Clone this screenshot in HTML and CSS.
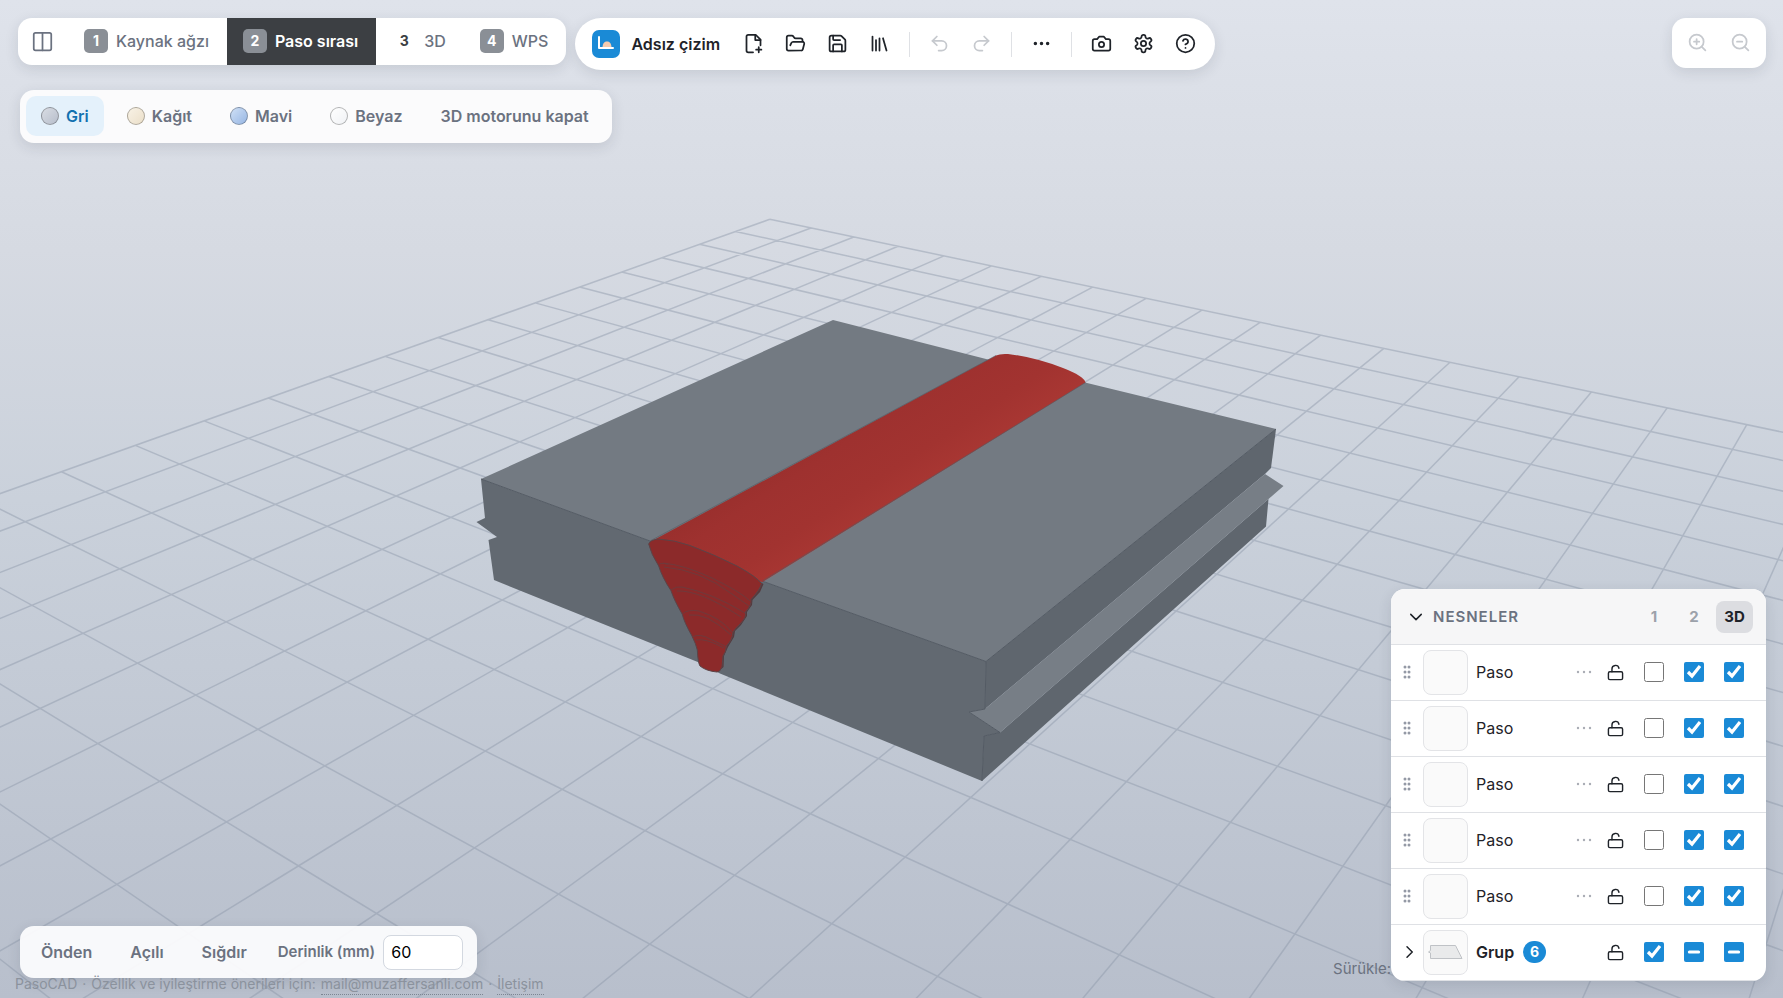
FILE: index.html
```html
<!DOCTYPE html>
<html lang="tr">
<head>
<meta charset="utf-8">
<meta name="viewport" content="width=device-width, initial-scale=1">
<title>PasoCAD</title>
<link rel="stylesheet" href="styles.css">
</head>
<body>
<svg class="sprite" aria-hidden="true">
  <symbol id="i-unlock" viewBox="0 0 24 24"><rect x="2" y="11" width="20" height="11" rx="2"/><path d="M7 11V7a5 5 0 0 1 9.900-1"/></symbol>
  <symbol id="i-grip" viewBox="0 0 8 14"><g fill="currentColor" stroke="none"><circle cx="2" cy="2" r="1.500"/><circle cx="6" cy="2" r="1.500"/><circle cx="2" cy="7" r="1.500"/><circle cx="6" cy="7" r="1.500"/><circle cx="2" cy="12" r="1.500"/><circle cx="6" cy="12" r="1.500"/></g></symbol>
  <symbol id="i-dots" viewBox="0 0 16 4"><g fill="currentColor" stroke="none"><circle cx="2" cy="2" r="1.200"/><circle cx="8" cy="2" r="1.200"/><circle cx="14" cy="2" r="1.200"/></g></symbol>
</svg>

<div class="app">
  <svg class="scene" viewBox="0 0 1783 998" preserveAspectRatio="xMidYMid slice" role="img" aria-label="3D">
    <defs>
      <linearGradient id="bead" gradientUnits="userSpaceOnUse" x1="800" y1="430" x2="865" y2="530">
        <stop offset="0" stop-color="#972e2c"/><stop offset=".3" stop-color="#9e312f"/><stop offset=".7" stop-color="#a23330"/><stop offset="1" stop-color="#a93733"/>
      </linearGradient>
    </defs>
    <path class="grid-lines" id="grid"/>
    <g class="plate">
      <path class="face-top" d="M833 320 988 359.500 1085 382.500 1276 429 986 661.500 762 581 650 541 481 479Z"/>
      <path class="face-front" d="M481 479 650 541 762 581 986 661.500 985 709 969 712 1000 732.500 984 736 982 781 720 673.500 699 662.500 494 580 488.500 540 497 537 476.500 522 485 518Z"/>
      <path class="face-side" d="M986 661.500 1276 429 1271 468 1265 474 985 709Z"/>
      <path class="face-side" d="M984 736 1000 732.500 1268.500 499 1266 526.500 982 781Z"/>
      <path class="face-groove" d="M969 712 985 709 1265 474 1283.500 486 1268.500 499 1000 732.500Z"/>
      <path class="edges" d="M481 479 650 541M762 581 986 661.500V662L985 709 969 712 1000 732.500 984 736 982 781M986 661.500 1276 429"/>
    </g>
    <path fill="url(#bead)" d="M650 542 996 355.500Q1000 353.500 1008 354 1034 357 1063 368 1084 376 1085.500 382.500L762.500 582 735 575Z"/>
    <path class="edges" d="M650 541 996 355.500M762.500 581 1085.500 382.500" opacity=".6"/>
    <path class="weld-back" d="M760 582 763.500 584 760 592 752.500 600 752 605 747 612 747 616 741 625 735 631 734 637 728 647 724 656 723.500 667 718 672 700 640Z"/>
    <path class="weld-face" d="M648.700 544Q650 540 658 539 675 540 690 545.500 713 554 737 566 757 577 761.500 583.500 760 590 751 599.500 752 605 745.500 612 747 617 740 624 735 629 733 632 733 639 726.500 646 726 652 723 656L722 667Q720 672 717 672 706 671 700 666 698 663 697.300 650 696 644 692 636 684 622 682.300 614.300 674 600 671 590.700 662 577 658.700 566 651 554 648.700 544Z"/>
    <path class="passes" d="M658 565Q661 562 668 564.500M663 563Q684 565 710 577 741 592 750 601M664 567Q700 570 732 594L749 606M671 590Q676 586 682 587 712 593 745 613M677 591Q700 590 741 617M682 614Q688 609 699 611 721 618 732 632M689 615Q706 612 731 635M692 637Q700 633 710 639L727 647M696 640Q706 638 724 648"/>
  </svg>

  <header class="top">
    <nav class="card tabs" aria-label="Sekmeler">
      <button class="tab tab-icon" type="button" aria-label="Bölünmüş görünüm"><svg class="icon" viewBox="0 0 24 24"><rect x="2" y="2" width="20" height="20" rx="2"/><path d="M12 2v20"/></svg></button>
      <button class="tab" type="button"><span class="num">1</span>Kaynak ağzı</button>
      <button class="tab active" type="button"><span class="num">2</span>Paso sırası</button>
      <button class="tab" type="button"><span class="num plain">3</span>3D</button>
      <button class="tab" type="button"><span class="num">4</span>WPS</button>
    </nav>
    <div class="card filebar">
      <svg class="logo" viewBox="0 0 28 28" aria-hidden="true"><rect width="28" height="28" rx="7" fill="#1a8ad6"/><path d="M10.500 18c0-5 2-6.500 4.500-6.500s4.500 1.500 4.500 6.500Z" fill="#f4cbb0"/><path d="M7 7v11h14" fill="none" stroke="#fff" stroke-width="2" stroke-linecap="round" stroke-linejoin="round"/></svg>
      <button class="title" type="button">Adsız çizim</button>
      <button class="tool" type="button" aria-label="Yeni"><svg class="icon" viewBox="0 0 24 24"><path d="M11.500 22H6a2 2 0 0 1-2-2V4a2 2 0 0 1 2-2h8.500L20 7.500v6.500"/><path d="M14 2v6h6M18 16v6M15 19h6"/></svg></button>
      <button class="tool" type="button" aria-label="Aç"><svg class="icon" viewBox="0 0 24 24"><path d="m6 14 1.500-2.900A2 2 0 0 1 9.240 10H20a2 2 0 0 1 1.940 2.500l-1.540 6a2 2 0 0 1-1.950 1.500H4a2 2 0 0 1-2-2V5a2 2 0 0 1 2-2h3.900a2 2 0 0 1 1.690.9l.81 1.200a2 2 0 0 0 1.670.9H18a2 2 0 0 1 2 2v2"/></svg></button>
      <button class="tool" type="button" aria-label="Kaydet"><svg class="icon" viewBox="0 0 24 24"><path d="M15.200 3a2 2 0 0 1 1.400.6l3.800 3.800a2 2 0 0 1 .6 1.400V19a2 2 0 0 1-2 2H5a2 2 0 0 1-2-2V5a2 2 0 0 1 2-2z"/><path d="M17 21v-7a1 1 0 0 0-1-1H8a1 1 0 0 0-1 1v7M7 3v4a1 1 0 0 0 1 1h7"/></svg></button>
      <button class="tool" type="button" aria-label="Kitaplık"><svg class="icon" viewBox="0 0 24 24"><path d="m16 6 4 14M12 6v14M8 8v12M4 4v16"/></svg></button>
      <span class="divider"></span>
      <button class="tool" type="button" aria-label="Geri al" disabled><svg class="icon" viewBox="0 0 24 24"><path d="M9 14 4 9l5-5"/><path d="M4 9h10.500a5.500 5.500 0 0 1 0 11H11"/></svg></button>
      <button class="tool" type="button" aria-label="Yinele" disabled><svg class="icon" viewBox="0 0 24 24"><path d="m15 14 5-5-5-5"/><path d="M20 9H9.500a5.500 5.500 0 0 0 0 11H13"/></svg></button>
      <span class="divider"></span>
      <button class="tool" type="button" aria-label="Diğer"><svg class="icon" viewBox="0 0 24 24"><g fill="currentColor"><circle cx="5" cy="12" r="1"/><circle cx="12" cy="12" r="1"/><circle cx="19" cy="12" r="1"/></g></svg></button>
      <span class="divider"></span>
      <button class="tool" type="button" aria-label="Ekran görüntüsü"><svg class="icon" viewBox="0 0 24 24"><path d="M14.500 4h-5L7 7H4a2 2 0 0 0-2 2v9a2 2 0 0 0 2 2h16a2 2 0 0 0 2-2V9a2 2 0 0 0-2-2h-3z"/><circle cx="12" cy="13" r="3"/></svg></button>
      <button class="tool" type="button" aria-label="Ayarlar"><svg class="icon" viewBox="0 0 24 24"><path d="M12.220 2h-.44a2 2 0 0 0-2 2v.18a2 2 0 0 1-1 1.730l-.43.25a2 2 0 0 1-2 0l-.15-.08a2 2 0 0 0-2.730.73l-.22.38a2 2 0 0 0 .73 2.730l.15.100a2 2 0 0 1 1 1.720v.51a2 2 0 0 1-1 1.740l-.15.090a2 2 0 0 0-.73 2.730l.22.380a2 2 0 0 0 2.730.730l.15-.080a2 2 0 0 1 2 0l.43.250a2 2 0 0 1 1 1.730V20a2 2 0 0 0 2 2h.44a2 2 0 0 0 2-2v-.18a2 2 0 0 1 1-1.730l.43-.25a2 2 0 0 1 2 0l.15.080a2 2 0 0 0 2.730-.73l.22-.39a2 2 0 0 0-.73-2.730l-.15-.080a2 2 0 0 1-1-1.740v-.5a2 2 0 0 1 1-1.740l.15-.090a2 2 0 0 0 .73-2.730l-.22-.38a2 2 0 0 0-2.730-.73l-.15.080a2 2 0 0 1-2 0l-.43-.25a2 2 0 0 1-1-1.730V4a2 2 0 0 0-2-2z"/><circle cx="12" cy="12" r="3"/></svg></button>
      <button class="tool" type="button" aria-label="Yardım"><svg class="icon" viewBox="0 0 24 24"><circle cx="12" cy="12" r="10"/><path d="M9.090 9a3 3 0 0 1 5.830 1c0 2-3 3-3 3M12 17h.01"/></svg></button>
    </div>
    <div class="card zoombar">
      <button class="tool" type="button" aria-label="Yakınlaştır" disabled><svg class="icon" viewBox="0 0 24 24"><circle cx="11" cy="11" r="8"/><path d="m21 21-4.350-4.350M11 8v6M8 11h6"/></svg></button>
      <button class="tool" type="button" aria-label="Uzaklaştır" disabled><svg class="icon" viewBox="0 0 24 24"><circle cx="11" cy="11" r="8"/><path d="m21 21-4.350-4.350M8 11h6"/></svg></button>
    </div>
  </header>

  <div class="card modes">
    <button class="pill selected" type="button"><span class="swatch gray"></span>Gri</button>
    <button class="pill" type="button"><span class="swatch paper"></span>Kağıt</button>
    <button class="pill" type="button"><span class="swatch blue"></span>Mavi</button>
    <button class="pill" type="button"><span class="swatch white"></span>Beyaz</button>
    <button class="pill" type="button">3D motorunu kapat</button>
  </div>

  <div class="bottom">
    <div class="card viewbar">
      <button class="pill" type="button">Önden</button>
      <button class="pill" type="button">Açılı</button>
      <button class="pill" type="button">Sığdır</button>
      <label class="depth" for="depth">Derinlik (mm)</label>
      <input class="depth-input" id="depth" type="text" inputmode="numeric" value="60">
    </div>

    <section class="card objects" aria-label="Nesneler">
      <div class="objects-head">
        <button class="collapse" type="button" aria-label="Daralt"><svg class="icon" viewBox="0 0 24 24"><path d="m5 8.500 7 7 7-7"/></svg></button>
        <h2 class="objects-title">NESNELER</h2>
        <button class="col" type="button">1</button>
        <button class="col" type="button">2</button>
        <button class="col current" type="button">3D</button>
      </div>
      <ul class="rows" id="rows">
        <li class="row"><svg class="grip"><use href="#i-grip"/></svg><span class="thumb"></span><span class="name">Paso</span><svg class="dots"><use href="#i-dots"/></svg><button class="lock" type="button" aria-label="Kilitle"><svg class="icon"><use href="#i-unlock"/></svg></button><input type="checkbox" aria-label="Paso 1"><input type="checkbox" aria-label="Paso 2" checked><input type="checkbox" aria-label="Paso 3D" checked></li>
        <li class="row"><svg class="grip"><use href="#i-grip"/></svg><span class="thumb"></span><span class="name">Paso</span><svg class="dots"><use href="#i-dots"/></svg><button class="lock" type="button" aria-label="Kilitle"><svg class="icon"><use href="#i-unlock"/></svg></button><input type="checkbox" aria-label="Paso 1"><input type="checkbox" aria-label="Paso 2" checked><input type="checkbox" aria-label="Paso 3D" checked></li>
        <li class="row"><svg class="grip"><use href="#i-grip"/></svg><span class="thumb"></span><span class="name">Paso</span><svg class="dots"><use href="#i-dots"/></svg><button class="lock" type="button" aria-label="Kilitle"><svg class="icon"><use href="#i-unlock"/></svg></button><input type="checkbox" aria-label="Paso 1"><input type="checkbox" aria-label="Paso 2" checked><input type="checkbox" aria-label="Paso 3D" checked></li>
        <li class="row"><svg class="grip"><use href="#i-grip"/></svg><span class="thumb"></span><span class="name">Paso</span><svg class="dots"><use href="#i-dots"/></svg><button class="lock" type="button" aria-label="Kilitle"><svg class="icon"><use href="#i-unlock"/></svg></button><input type="checkbox" aria-label="Paso 1"><input type="checkbox" aria-label="Paso 2" checked><input type="checkbox" aria-label="Paso 3D" checked></li>
        <li class="row"><svg class="grip"><use href="#i-grip"/></svg><span class="thumb"></span><span class="name">Paso</span><svg class="dots"><use href="#i-dots"/></svg><button class="lock" type="button" aria-label="Kilitle"><svg class="icon"><use href="#i-unlock"/></svg></button><input type="checkbox" aria-label="Paso 1"><input type="checkbox" aria-label="Paso 2" checked><input type="checkbox" aria-label="Paso 3D" checked></li>
        <li class="row"><button class="expand" type="button" aria-label="Genişlet"><svg class="icon" viewBox="0 0 24 24"><path d="m8 5 7 7-7 7"/></svg></button><span class="thumb"><svg class="preview" viewBox="0 0 36 16"><path d="M2.500 1.500h25l6.500 13H2.500V9L.5 8l2-1.500Z"/></svg></span><span class="name group">Grup<span class="count">6</span></span><span></span><button class="lock" type="button" aria-label="Kilitle"><svg class="icon"><use href="#i-unlock"/></svg></button><input type="checkbox" aria-label="Grup 1" checked><input type="checkbox" aria-label="Grup 2" data-mixed><input type="checkbox" aria-label="Grup 3D" data-mixed></li>
      </ul>
    </section>
  </div>

  <p class="hint">Sürükle:</p>
  <footer class="credits"><span>PasoCAD</span><span>·</span><span>Özellik ve iyileştirme önerileri için:</span><a href="mailto:mail@muzaffersanli.com">mail@muzaffersanli.com</a><span>·</span><a href="#">İletişim</a></footer>
</div>
<script src="scene.js"></script>
</body>
</html>
```
FILE: styles.css
```css
*, *::before, *::after { box-sizing: border-box; }

body {
  margin: 0;
  font-family: Inter, "Liberation Sans", sans-serif;
  font-size: 16px;
  line-height: 20px;
  color: #1f2329;
}

button, input { font: inherit; color: inherit; }
button { border: 0; background: none; padding: 0; cursor: pointer; }
.sprite { display: none; }

.app {
  position: relative;
  display: flex;
  flex-direction: column;
  min-height: 100vh;
  overflow: hidden;
  background: linear-gradient(#dfe3eb 0%, #d6dae2 25%, #cad1db 50%, #b8bfcc 100%);
}

.scene { position: absolute; inset: 0; width: 100%; height: 100%; }
.grid-lines { fill: none; stroke: #8b97a8; stroke-opacity: .45; stroke-width: 1.5; }
.face-top { fill: #737a82; }
.face-front { fill: #626971; }
.face-side { fill: #5f666e; }
.face-groove { fill: #777e86; }
.edges { fill: none; stroke: #545b64; stroke-width: 1; }
.weld-face { fill: #8c2a2a; stroke: #5b4448; stroke-width: 1; }
.weld-back { fill: #55393d; }
.passes { fill: none; stroke: #6f3a3c; stroke-width: 1; }

.card {
  background: #fff;
  border-radius: 14px;
  box-shadow: 0 4px 14px rgba(30, 40, 60, .12);
}

.icon {
  width: 21px;
  height: 21px;
  fill: none;
  stroke: currentColor;
  stroke-width: 2;
  stroke-linecap: round;
  stroke-linejoin: round;
}

.top {
  position: relative;
  display: flex;
  align-items: flex-start;
  padding: 18px 17px 0 18px;
  gap: 9px;
}

.tabs { display: flex; height: 47px; overflow: hidden; color: #6b7280; }
.tab { display: flex; align-items: center; gap: 8px; padding: 0 18px 1px 16px; font-weight: 500; }
.tab-icon { padding: 0 15px 1px 14px; }
.tab.active { background: #3c3f43; color: #fff; font-weight: 600; }
.num {
  display: grid;
  place-items: center;
  width: 24px;
  height: 24px;
  border-radius: 5px;
  background: #8a8f96;
  color: #fff;
  font-size: 14px;
  font-weight: 700;
}
.num.plain { background: none; color: #3c3f43; }

.filebar {
  display: flex;
  align-items: center;
  gap: 4px;
  height: 52px;
  padding: 0 11px 0 17px;
  border-radius: 26px;
}
.logo { width: 28px; height: 28px; }
.title { padding: 0 10px 0 7px; font-weight: 600; }
.tool { display: grid; place-items: center; width: 38px; height: 38px; padding-bottom: 1px; }
.tool:disabled { color: #c6c9ce; cursor: default; }
.divider { width: 1px; height: 25px; margin: 0 6px 0 7px; background: #dfe1e5; }

.zoombar { display: flex; gap: 5px; margin-left: auto; padding: 6px 7px 6px 6px; }

.modes {
  position: relative;
  align-self: flex-start;
  display: flex;
  gap: 8px;
  margin: 20px 0 0 20px;
  padding: 6px 8px 7px 6px;
  background: #fbfbfc;
}
.pill {
  display: flex;
  align-items: center;
  gap: 7px;
  height: 40px;
  padding: 0 15px;
  border-radius: 10px;
  color: #6b7280;
  font-weight: 600;
}
.pill.selected { background: #e4f1fb; color: #1271b0; }
.swatch { width: 18px; height: 18px; border: 1px solid rgba(0, 0, 0, .28); border-radius: 50%; }
.gray { background: linear-gradient(135deg, #d9dde4, #b7becb); }
.paper { background: linear-gradient(135deg, #f8f2e6, #ebdfc9); }
.blue { background: linear-gradient(135deg, #cfe0f6, #97b6e3); }
.white { background: linear-gradient(135deg, #fff, #f0f2f5); }

.bottom {
  position: relative;
  display: flex;
  align-items: flex-end;
  justify-content: space-between;
  margin-top: auto;
  padding: 0 17px 17px 20px;
}

.viewbar {
  display: flex;
  align-items: center;
  gap: 8px;
  height: 52px;
  margin-bottom: 3px;
  padding: 0 14px 0 6px;
  background: rgba(253, 253, 254, .93);
}
.depth { padding-left: 8px; color: #6b7280; font-size: 15px; font-weight: 600; }
.depth-input {
  width: 80px;
  height: 35px;
  padding: 0 7px;
  border: 1px solid #d3d8e0;
  border-radius: 8px;
  background: #fff;
  color: #000;
}

.objects { width: 375px; overflow: hidden; }
.objects-head {
  display: grid;
  grid-template-columns: 18px 1fr 40px 40px 40px;
  align-items: center;
  height: 56px;
  padding: 0 12px 0 16px;
  border-bottom: 1px solid #dfe1e5;
  background: #f6f6f7;
}
.collapse, .expand, .lock { display: grid; place-items: center; }
.collapse .icon { width: 18px; height: 18px; }
.objects-title { margin: 0; padding-left: 8px; color: #6b7280; font-size: 15px; font-weight: 600; letter-spacing: 1px; }
.col { height: 32px; border-radius: 8px; color: #9ca1aa; font-size: 15px; font-weight: 700; }
.col.current { margin: 0 1px 0 2px; background: #dcdde1; color: #1f2329; }

.rows { margin: 0; padding: 0; list-style: none; }
.row {
  display: grid;
  grid-template-columns: 24px 45px 1fr 24px 38px 40px 40px 40px;
  align-items: center;
  height: 56px;
  padding: 0 12px 1px 8px;
  border-bottom: 1px solid #dfe1e5;
  justify-items: center;
}
.grip { width: 8px; height: 14px; margin-right: 8px; color: #9499a5; }
.expand .icon { width: 18px; height: 18px; margin-right: 2px; }
.thumb { display: grid; place-items: center; width: 45px; height: 45px; border: 1px solid #e3e4e7; border-radius: 8px; background: #fafafa; }
.preview { width: 36px; height: 16px; fill: #e9eaeb; stroke: #bfc2c6; }
.name { justify-self: start; padding-left: 8px; }
.name.group { display: flex; align-items: center; gap: 9px; font-weight: 600; }
.count { display: grid; place-items: center; width: 23px; height: 22px; border-radius: 11px; background: #1a8ad6; color: #fff; font-size: 14px; font-weight: 700; }
.dots { width: 16px; height: 4px; color: #a9adb5; }
.lock .icon { width: 17px; height: 17px; }
.row input { width: 20px; height: 20px; margin: 0; accent-color: #1a8ad6; }

.hint { position: absolute; right: 392px; bottom: 19px; margin: 0; color: #6b7280; font-size: 15px; }

.credits {
  position: absolute;
  left: 15px;
  bottom: 3px;
  display: flex;
  gap: 5px;
  color: #8b929d;
  font-size: 14px;
}
.credits a { color: inherit; text-decoration: none; border-bottom: 1px dotted #7d8592; }
```
FILE: scene.js
```js
// Ground grid: a flat 20 x 20 mesh drawn through the camera's perspective.
const SIZE = 20;

function project(u, v) {
  const w = 1 - 0.024245 * u - 0.01734 * v;
  const x = (769.8 - 52.09 * u + 27.18 * v) / w;
  const y = -272 + 491.3 / w;
  return x.toFixed(1) + " " + y.toFixed(1);
}

let d = "";
for (let i = 0; i <= SIZE; i++) {
  d += "M" + project(i, 0) + "L" + project(i, SIZE);
  d += "M" + project(0, i) + "L" + project(SIZE, i);
}
document.getElementById("grid").setAttribute("d", d);

document.querySelectorAll("[data-mixed]").forEach((box) => {
  box.indeterminate = true;
});
```
